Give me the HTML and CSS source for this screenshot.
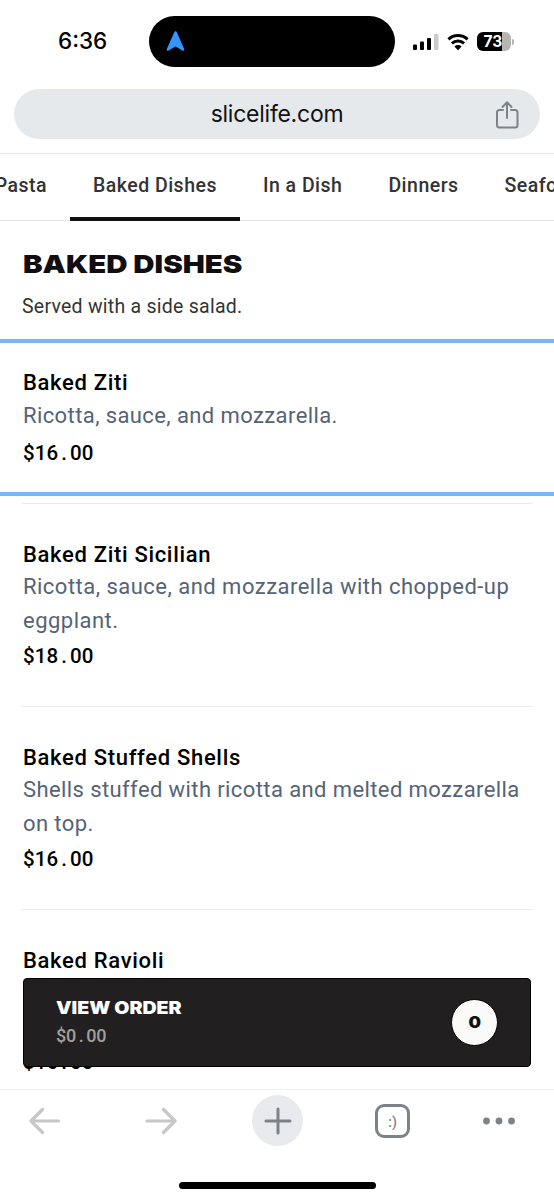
FILE: index.html
```html
<!DOCTYPE html>
<html lang="en">
<head>
<meta charset="utf-8">
<title>Baked Dishes</title>
<link rel="stylesheet" href="styles.css">
</head>
<body>
<div class="phone">
  <header class="status">
    <div class="clock">6:36</div>
    <div class="island">
      <svg width="20" height="22" viewBox="0 0 20 22"><path d="M10.500 2.500 L18 19.500 L10.500 15 L3 19.500 Z" fill="#3395ff" stroke="#3395ff" stroke-width="2.600" stroke-linejoin="round"/></svg>
    </div>
    <div class="indicators">
      <svg class="signal" width="26" height="17" viewBox="0 0 26 17"><rect x="0" y="10.500" width="4" height="5.500" rx="1"/><rect x="7" y="7.500" width="4" height="8.500" rx="1"/><rect x="14" y="4" width="4" height="12" rx="1"/><rect x="21" y="0" width="4.500" height="16" rx="1" fill="#ccc"/></svg>
      <svg class="wifi" width="22" height="17" viewBox="0 0 22 17"><path d="M1.400 5.400a14 14 0 0 1 19.200 0M4.900 9.300a9 9 0 0 1 12.200 0" fill="none" stroke="#000" stroke-width="3"/><path d="M7.400 12.500a5.200 5.200 0 0 1 7.200 0L11 16.200Z"/></svg>
      <div class="battery"><span>73</span></div>
      <i class="battery-tip"></i>
    </div>
  </header>

  <div class="address">
    <span class="domain">slicelife.com</span>
    <svg class="share" width="24" height="28" viewBox="0 0 24 28" fill="none" stroke="#7c848a" stroke-width="2" stroke-linecap="round" stroke-linejoin="round"><path d="M8 9H4.500a2.500 2.500 0 0 0-2.500 2.500V24a2.500 2.500 0 0 0 2.500 2.500h15.500a2.500 2.500 0 0 0 2.500-2.500V11.500a2.500 2.500 0 0 0-2.500-2.500H16M12 17V1.500M7.500 6 12 1.200 16.500 6"/></svg>
  </div>

  <nav class="tabs">
    <a class="tab">Pasta</a>
    <a class="tab active">Baked Dishes</a>
    <a class="tab">In a Dish</a>
    <a class="tab">Dinners</a>
    <a class="tab">Seafood</a>
  </nav>

  <main class="menu">
    <h1 class="heading"><span>BAKED DISHES</span></h1>
    <p class="note">Served with a side salad.</p>

    <article class="item selected">
      <h2>Baked Ziti</h2>
      <p class="desc">Ricotta, sauce, and mozzarella.</p>
      <div class="price">$16<span class="dot">.</span>00</div>
    </article>
    <hr class="rule">
    <article class="item">
      <h2>Baked Ziti Sicilian</h2>
      <p class="desc wide">Ricotta, sauce, and mozzarella with chopped-up<br>eggplant.</p>
      <div class="price">$18<span class="dot">.</span>00</div>
    </article>
    <hr class="rule">
    <article class="item">
      <h2>Baked Stuffed Shells</h2>
      <p class="desc">Shells stuffed with ricotta and melted mozzarella<br>on top.</p>
      <div class="price">$16<span class="dot">.</span>00</div>
    </article>
    <hr class="rule">
    <article class="item">
      <h2>Baked Ravioli</h2>
      <p class="desc"></p>
      <div class="price">$16<span class="dot">.</span>00</div>
    </article>

    <div class="order">
      <div>
        <div class="order-title"><span>VIEW ORDER</span></div>
        <div class="order-total">$0<span class="dot">.</span>00</div>
      </div>
      <div class="count"><span>0</span></div>
    </div>
  </main>

  <footer class="toolbar">
    <svg width="32" height="28" viewBox="0 0 32 28" fill="none" stroke="#c7c7c7" stroke-width="3.200" stroke-linecap="round" stroke-linejoin="round"><path d="M29.500 14H2M13.500 2.500 2 14l11.500 11.500"/></svg>
    <svg width="32" height="28" viewBox="0 0 32 28" fill="none" stroke="#c7c7c7" stroke-width="3.200" stroke-linecap="round" stroke-linejoin="round"><path d="M2 14h28M18.500 2.500 30 14 18.500 25.500"/></svg>
    <div class="plus"><svg width="28" height="28" viewBox="0 0 28 28" fill="none" stroke="#7b8388" stroke-width="3" stroke-linecap="round"><path d="M2 14h24M14 2v24"/></svg></div>
    <div class="pages">:)</div>
    <svg width="32" height="8" viewBox="0 0 32 8" fill="#7b8388"><circle cx="3.500" cy="4" r="3.400"/><circle cx="16" cy="4" r="3.400"/><circle cx="28.500" cy="4" r="3.400"/></svg>
    <div class="home"></div>
  </footer>
</div>
</body>
</html>
```
FILE: styles.css
```css
* { box-sizing: border-box; margin: 0; padding: 0; }
body { background: #fff; font-family: Roboto, "Liberation Sans", sans-serif; color: #000; }
.phone { width: 554px; height: 1200px; display: flex; flex-direction: column; overflow: hidden; }
svg { display: block; flex: none; }

.status { height: 89px; display: grid; grid-template-columns: 149px 246px 1fr; align-items: start; flex: none; }
.clock { padding: 27px 0 0 58px; font: 500 22.500px/27px Inter, sans-serif; letter-spacing: 0; }
.island { margin-top: 16px; height: 51px; border-radius: 26px; background: #000; padding: 14px 0 0 16px; }
.indicators { display: flex; align-items: center; padding: 32px 0 0 18px; }
.signal, .wifi { margin-bottom: -1px; }
.wifi { margin-left: 8px; margin-right: 8px; }
.battery { width: 34px; height: 19px; border-radius: 6px; background: linear-gradient(90deg, #000 25px, #b5b5b5 25px); color: #fff; font: 700 15.500px/19px Inter, sans-serif; text-align: center; padding-right: 2px; }
.battery-tip { width: 2px; height: 6px; margin-left: 1px; border-radius: 0 2px 2px 0; background: #b5b5b5; }

.address { height: 50px; margin: 0 14px; border-radius: 25px; background: #e6e9ec; display: grid; grid-template-columns: 1fr auto 1fr; align-items: center; flex: none; }
.domain { grid-column: 2; font: 400 23px/50px Inter, sans-serif; letter-spacing: -0.25px; color: #111; }
.share { justify-self: end; margin-right: 21px; margin-top: 2px; }

.tabs { margin-top: 14px; height: 68px; border-top: 1px solid #e8e8e8; border-bottom: 1px solid #e5e4e0; display: flex; flex: none; width: 650px; margin-left: -28.300px; }
.tab { flex: none; height: 67px; padding: 0 23px; font-size: 19.500px; font-weight: 500; line-height: 63px; letter-spacing: 0.480px; color: #333; }
.tab.active { border-bottom: 4px solid #111; }

.menu { position: relative; flex: none; height: 868px; overflow: hidden; }
.heading { padding: 26px 0 0 23px; font: 900 25px/34px Inter, sans-serif; color: #120d10; }
.heading span { display: inline-block; transform-origin: left; transform: scaleX(1.175); }
.note { padding: 10px 0 0 22px; font-size: 19.500px; line-height: 32px; letter-spacing: 0.250px; color: #333; height: 58px; }

.item { height: 202px; padding: 35px 0 0 23px; }
.item h2 { font-size: 22px; line-height: 31px; font-weight: 500; letter-spacing: 0.680px; }
.desc { height: 68px; font-size: 22px; line-height: 34px; letter-spacing: 0.400px; color: #556377; white-space: nowrap; }
.desc.wide { letter-spacing: 0.480px; }
.price { margin-top: 2px; font-size: 20.500px; line-height: 32px; font-weight: 500; letter-spacing: 0.120px; }
.dot { display: inline-block; width: 11.700px; text-align: center; }
.item.selected { height: 157px; padding-top: 24px; border-top: 4px solid #78b7fc; border-bottom: 4px solid #78b7fc; margin-bottom: 7px; }
.selected h2 { line-height: 32px; }
.selected .desc { height: 34px; }
.selected .price { margin-top: 4px; }
.rule { border: 0; height: 1px; margin: 0 21px 0 22px; background: #ececec; }

.order { position: absolute; left: 23px; right: 23px; top: 757px; height: 89px; border: 1px solid #000; border-radius: 4px; background: #211f20; display: flex; justify-content: space-between; padding: 17px 32px 0 32px; }
.order-title { font: 900 17px/25px Inter, sans-serif; color: #fff; }
.order-title span { display: inline-block; transform-origin: left; transform: scaleX(1.150); }
.order-total { font-size: 18px; line-height: 28px; font-weight: 500; color: #a19f9d; letter-spacing: -0.150px; margin-top: 1px; }
.order-total .dot { width: 10px; }
.count { width: 47px; height: 47px; margin-top: 3px; border-radius: 50%; border: 1px solid #000; background: #fafaf8; font: 900 16px/45px Inter, sans-serif; text-align: center; color: #111; }
.count span { display: inline-block; transform: scaleX(1.100); }

.toolbar { position: relative; flex: none; height: 111px; border-top: 1px solid #eee; display: grid; grid-template-columns: 116px 107px 123px 108px 32px; padding: 5px 39px 0 29px; align-items: start; }
.toolbar > svg { margin-top: 12px; }
.toolbar > svg:nth-of-type(3) { margin-top: 22px; }
.plus { width: 51px; height: 51px; border-radius: 50%; background: #e8eaed; display: grid; place-items: center; }
.pages { width: 35px; height: 34px; margin-top: 9px; border: 3px solid #7b8388; border-radius: 9px; text-align: center; font: 500 14px/30px Roboto, sans-serif; color: #7b8388; }
.home { position: absolute; left: 179px; bottom: 11px; width: 197px; height: 7px; border-radius: 4px; background: #000; }
```
